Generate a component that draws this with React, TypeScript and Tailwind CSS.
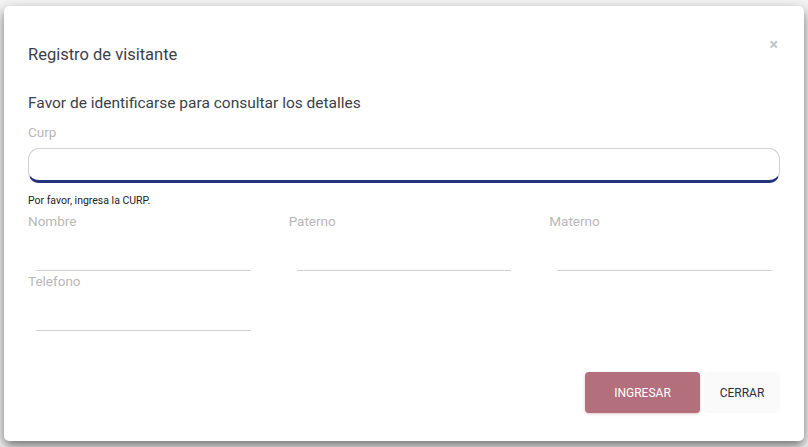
import React from "react";

const FONT = "font-['Roboto','Liberation_Sans',sans-serif]";

// underlined inputs inside a bootstrap-like column
function LineField({ label }: { label: string }) {
  return (
    <div className="px-[15px]">
      <div className="text-[13.5px] leading-[20px] text-[#b8b8b8]">{label}</div>
      <div className="mx-2 h-[40px] border-b border-[#cfcfcf]" />
    </div>
  );
}

export default function App() {
  return (
    <div className={`w-[808px] h-[447px] bg-[#f4f4f4] overflow-hidden pt-[6px] px-1 ${FONT}`}>
      <div className="relative w-[800px] h-[435px] rounded-[5px] bg-white shadow-[0_5px_12px_rgba(0,0,0,0.55)] px-[24px] pt-[37px]">
        <button className="absolute right-[26px] top-[31px] text-[16px] font-bold leading-none text-[#c4c4c4]">
          ×
        </button>
        <h2 className="text-[16.5px] leading-[24px] text-[#3b3f4a]">Registro de visitante</h2>

        <p className="mt-[24px] text-[15.5px] leading-[24px] text-[#3b3f4a]">
          Favor de identificarse para consultar los detalles
        </p>

        <div className="mt-[7px] text-[13.5px] leading-[20px] text-[#b8b8b8]">Curp</div>
        <div className="mt-[6px] h-[35px] rounded-[11px] border border-[#d2d2d2] border-b-[3px] border-b-[#24337c]" />
        <div className="mt-[11px] text-[10.5px] leading-[14px] text-[#222]">
          Por favor, ingresa la CURP.
        </div>

        <div className="-mx-[15px] mt-[3px] grid grid-cols-3">
          <LineField label="Nombre" />
          <LineField label="Paterno" />
          <LineField label="Materno" />
          <LineField label="Telefono" />
        </div>

        <div className="mt-[41px] flex justify-end gap-1">
          <button className="w-[115px] h-[41px] rounded-[4px] bg-[#b36f7c] text-[12px] text-white shadow-[0_1px_3px_rgba(179,111,124,0.4)]">
            INGRESAR
          </button>
          <button className="w-[76px] h-[41px] rounded-[4px] bg-[#fafafa] text-[12px] text-[#2c2f3a]">
            CERRAR
          </button>
        </div>
      </div>
    </div>
  );
}
